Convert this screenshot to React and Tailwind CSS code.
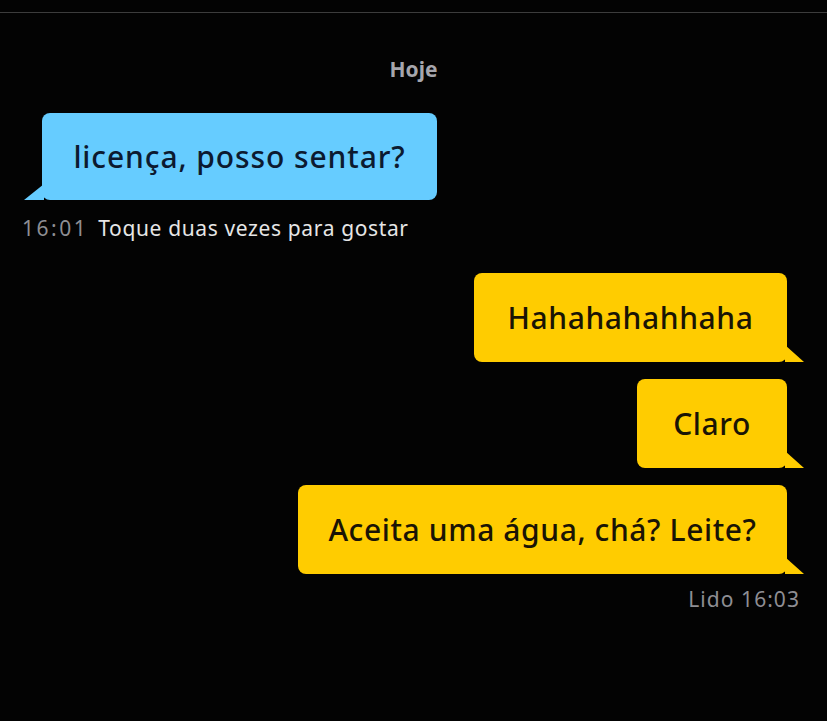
import React from "react";

const FONT = { fontFamily: '"Noto Sans", "Open Sans", sans-serif' };

function TailLeft({ color }) {
  return (
    <svg className="absolute -left-[18px] bottom-0" width="20" height="16" viewBox="0 0 20 16">
      <path d="M20 0 L20 16 L0 16 Z" fill={color} />
    </svg>
  );
}

function TailRight({ color }) {
  return (
    <svg className="absolute -right-[17px] bottom-0" width="19" height="17" viewBox="0 0 19 17">
      <path d="M0 0 L19 17 L0 17 Z" fill={color} />
    </svg>
  );
}

function Outgoing({ text, width }) {
  return (
    <div className={`relative ${width} h-[89px] bg-[#ffcc00] rounded-lg flex items-center justify-center`}>
      <span className="text-[30px] font-medium tracking-[0.02em] text-[#1a1405] leading-none">{text}</span>
      <TailRight color="#ffcc00" />
    </div>
  );
}

export default function App() {
  return (
    <main className="w-[827px] h-[721px] bg-[#030303] overflow-hidden" style={FONT}>
      <div className="h-3" />
      <div className="border-t border-[#3c3c3c]" />

      <div className="pt-[44px] text-center text-[21px] font-bold text-[#a6a6ad] leading-6">Hoje</div>

      <div className="pl-[42px] mt-[32px]">
        <div className="relative w-[395px] h-[87px] bg-[#66ccff] rounded-lg flex items-center justify-center">
          <span className="text-[30px] font-medium tracking-[0.03em] text-[#0c1a30] leading-none">licença, posso sentar?</span>
          <TailLeft color="#66ccff" />
        </div>
      </div>

      <div className="pl-[22px] mt-[16px] flex items-center gap-[10px] text-[21px] tracking-[0.03em] leading-6">
        <span className="text-[#8e8e93] tracking-[0.12em]">16:01</span>
        <span className="text-[#e6e6e6]">Toque duas vezes para gostar</span>
      </div>

      <div className="pr-[40px] mt-[33px] flex flex-col items-end gap-[17px]">
        <Outgoing text="Hahahahahhaha" width="w-[313px]" />
        <Outgoing text="Claro" width="w-[150px]" />
        <Outgoing text="Aceita uma água, chá? Leite?" width="w-[489px]" />
      </div>

      <div className="pr-[27px] mt-[13px] text-right text-[21px] tracking-[0.05em] text-[#8e8e93] leading-6">Lido 16:03</div>
    </main>
  );
}
